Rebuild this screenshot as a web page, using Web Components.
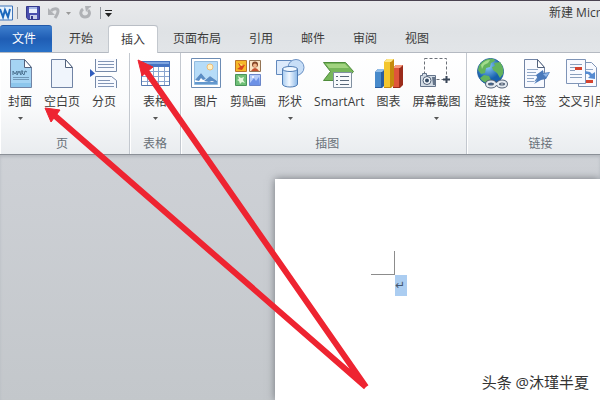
<!DOCTYPE html>
<html lang="zh-CN">
<head>
<meta charset="utf-8">
<title>新建</title>
<style>
    body {
        margin: 0;
        overflow: hidden;
        font: 12px/16px "Open Sans", "Noto Sans CJK SC", sans-serif;
        color: #3b3b3b;
    }
</style>
</head>
<body>
<word-window></word-window>
<script>
const page = (x, y, w, h, fill) => `
    <path d="M${x} ${y}h${w - 7}l7 8v${h - 8}h-${w}z" fill="${fill}" stroke="#7184a5"/>
    <path d="M${x + w - 7} ${y}v8h7z" fill="#fff" stroke="#52627d"/>`;

const icons = {
    cover: page(6.5, 1.5, 21, 28, '#a5d4f3') + `
        <path d="M9 17v-4l2 3 2-3v4l2-4 2 4v-4h2l-1 2 2 2 1-4 2 1" fill="none" stroke="#4b718f"/>
        <path d="M9 19.5h16M9 21.5h16" stroke="#7198b8"/>
        <path d="M7 25h20v4H7z" fill="#8cc6ec"/>`,
    blank: page(5.5, 1.5, 21, 28, '#f0f5fc'),
    split: `
        <path d="M7.500 1v12.500h21V1M7.500 30V18.500h16l5 4V30" fill="#f8faff" stroke="#7589a9"/>
        <path d="M10 3.500h16M10 6.500h16M10 9.500h16M10 22.500h12M10 25.500h16M10 28.500h16" stroke="#8295b5"/>
        <path d="M2 11l5 4.500L2 19z" fill="#315dbd"/>`,
    table: `
        <path d="M2.500 3.500h28v24h-28z" fill="#fff" stroke="#5578b0"/>
        <path d="M2 3h29v6H2z" fill="#4674c2"/><path d="M3 4h27v2H3z" fill="#7fa5df"/>
        <path d="M3 13.500h27M3 18.500h27M3 23.500h27M8.500 9v18M14.500 9v18M19.500 9v18M25.500 9v18" stroke="#8aa5cf"/>`,
    picture: `
        <path d="M1.500.5h29v29h-29z" fill="#fff" stroke="#6c8cb4"/>
        <path d="M4.500 3.500h23v23h-23z" fill="#b6dcf8" stroke="#93bce0"/>
        <circle cx="20" cy="9" r="3" fill="#fff2c5" stroke="#f0bd77"/>
        <path d="M5 22l6-7 5 6 4-3 7 5v3H5z" fill="#fff"/>
        <path d="M5 22l6-7 5 6-3 1-2-2-2 3zM14 23l6-5 7 5v2l-5-2-3 1z" fill="#5a8dc5"/>
        <path d="M5 24h22v2H5z" fill="#6398ce"/>`,
    clipart: `
        <path d="M3.500 2.500h11v11h-11z" fill="#f6b928" stroke="#ba742c"/>
        <path d="M6 5l7 2-3 5-5-1 3-2z" fill="#d9471d"/><path d="M7 5l5 2-3 1z" fill="#ffe95c"/>
        <path d="M17.500 2.500h11v11h-11z" fill="#fae5c5" stroke="#947454"/>
        <circle cx="23" cy="6.500" r="3" fill="#844526"/><circle cx="23" cy="7.500" r="2" fill="#f0b487"/><path d="M19 13q4-6 8 0z" fill="#c65130"/>
        <path d="M3.500 16.500h11v11h-11z" fill="#6fbf77" stroke="#499459"/>
        <path d="M6 18l3 2 3-1-1 3 2 3-3-1-2 2-1-3-2-1 2-1z" fill="#e8f9df"/>
        <path d="M17.500 16.500h11v11h-11z" fill="#b6cdfa" stroke="#6b86c9"/>
        <path d="M18 25l4-5 2 3 3-4 1 8H18z" fill="#6c91e6"/><circle cx="21" cy="19" r="1" fill="#fff"/>`,
    shapes: `
        <path d="M2.500 2.500h15v14h-15z" fill="#dceafb" stroke="#6289bd"/>
        <circle cx="22" cy="9.500" r="8" fill="#c7def7" stroke="#6b91c3"/>
        <path d="M8.500 11v15c0 4 15 4 15 0V11z" fill="url(#cyl)" stroke="#507db5"/>
        <ellipse cx="16" cy="11" rx="7.500" ry="2.500" fill="#f1f8ff" stroke="#507db5"/>
        <defs><linearGradient id="cyl"><stop stop-color="#a6cbf0"/><stop offset=".45" stop-color="#f2f8ff"/><stop offset="1" stop-color="#8bb8e8"/></linearGradient></defs>`,
    smartart: `
        <path d="M.5 4.500h22l8 9-8 9H.5l7-9z" fill="#76b65a" stroke="#4f8c3b"/>
        <path d="M3 6h19l4 4H6z" fill="#a1d37f"/>
        <path d="M10.500 14.500h18v15h-18z" fill="#f8fafc" stroke="#8090a1"/>
        <path d="M13 18.500h2M17 18.500h9M13 22.500h2M17 22.500h9M13 26.500h2M17 26.500h9" stroke="#586879"/>`,
    chart: `
        <path d="M3 14l3-3h7v16l-3 3H3z" fill="#285ca0"/><path d="M3 14h6v15H3z" fill="#478acb"/><path d="M3 14l3-3h7l-3 3z" fill="#91bee9"/>
        <path d="M21 10l3-3h7v20l-3 3h-7z" fill="#9b2c1b"/><path d="M21 10h6v19h-6z" fill="#df553b"/><path d="M21 10l3-3h7l-3 3z" fill="#f79c80"/>
        <path d="M12 4l3-3h7v26l-3 3h-7z" fill="#c58b0d"/><path d="M12 4h6v25h-6z" fill="#f3c62e"/><path d="M12 4l3-3h7l-3 3z" fill="#ffe784"/>`,
    capture: `
        <path d="M4.500.5h22v21h-22z" fill="#fff" stroke="#6c7178" stroke-dasharray="3 2"/>
        <path d="M26.500 18v7M23 21.500h7" stroke="#394658" stroke-width="2"/>
        <path d="M.5 17.500h2v-2h4v2h9v11H.5z" fill="#d3dce5" stroke="#64748a"/>
        <circle cx="7" cy="22.500" r="4" fill="#f8fbff" stroke="#4f6076"/><circle cx="7" cy="22.500" r="2" fill="#334a63"/>
        <path d="M12 19h3v8h-2z" fill="#65758a"/>`,
    link: `
        <circle cx="14.500" cy="13.500" r="13" fill="url(#sea)" stroke="#2864a1"/>
        <path d="M3 8C6 2 12 0 18 1l1 2-4 2-1 4-4 1-1 5-4 1-3-4zM18 5l6-1c3 4 4 8 3 12l-3 4-3-5-4-3-1-3 3-1zM8 17l5 1 2 4-2 4C8 24 6 23 4 20z" fill="#63b35c"/>
        <path d="M5 7q4-5 9-5l-2 3-4 2-2 4z" fill="#a3dc8d"/>
        <g fill="none" stroke="#526176" stroke-width="4"><ellipse cx="15" cy="26" rx="4" ry="2.500"/><ellipse cx="26" cy="26" rx="4" ry="2.500"/><path d="M18 27l5-2"/></g>
        <g fill="none" stroke="#e5ebf1" stroke-width="2"><ellipse cx="15" cy="26" rx="4" ry="2.500"/><ellipse cx="26" cy="26" rx="4" ry="2.500"/><path d="M18 27l5-2"/></g>
        <defs><radialGradient id="sea" cx=".4" cy=".3"><stop stop-color="#8dcdf5"/><stop offset="1" stop-color="#1760ae"/></radialGradient></defs>`,
    bookmark: page(6.5, 1.5, 20, 28, '#f8faff') + `
        <path d="M9 11.500h11M9 14.500h9M9 17.500h12M9 20.500h7M9 23.500h7" stroke="#91a7c6"/>
        <path d="M16 24l4-6 6-5-2 7z" fill="#6287b9"/>
        <path d="M18 17l7-5v3l7-1-4 7-5 1-7 4 4-5z" fill="#4b7abb"/><path d="M25 16l6-1-3 4z" fill="#90b6e6"/>`,
    crossref: `
        <path d="M12.500 4.500h13l5 5v19h-18z" fill="#f8faff" stroke="#7e94b7"/>
        <path d="M15 23.500h3M15 11.500h12M15 14.500h6" stroke="#91a7c6"/><path d="M20 22h7v3h-7z" fill="#d5432e"/>
        <path d="M.5 1.500h19v24H.5z" fill="#f8faff" stroke="#7e94b7"/>
        <path d="M4 6.500h12M4 9.500h5M4 12.500h5M4 16.500h12M4 19.500h12" stroke="#8a9fbd"/>
        <path d="M9 9h7v3H9z" fill="#d5432e"/><path d="M19 13l5 1 2 2 3-2v7l-7-1 2-2-2-2h-3z" fill="#568bd1"/>`
};

class RibbonButton extends HTMLElement {
    connectedCallback() {
        this.attachShadow({ mode: 'open' });
        this.shadowRoot.innerHTML = `
            <style>
                :host { display: block; flex: none; }
                button {
                    display: flex;
                    flex-direction: column;
                    align-items: center;
                    padding: 0;
                    border: 0;
                    background: none;
                    font: inherit;
                    color: inherit;
                    white-space: nowrap;
                }
                .icon { width: 32px; height: 32px; margin-bottom: 4px; }
                .label { padding: 0 6px; }
                .caret { margin-top: 7px; }
            </style>
            <button type="button">
                <svg class="icon" viewBox="0 0 32 32" aria-hidden="true">${icons[this.getAttribute('icon')]}</svg>
                <span class="label"><slot></slot></span>
                ${this.hasAttribute('menu') ? '<svg class="caret" width="5" height="3"><path d="M0 0h5L2.500 3z" fill="#555"/></svg>' : ''}
            </button>
        `;
    }
}

class RibbonGroup extends HTMLElement {
    connectedCallback() {
        this.attachShadow({ mode: 'open' });
        this.shadowRoot.innerHTML = `
            <style>
                :host {
                    display: flex;
                    flex: none;
                    flex-direction: column;
                    justify-content: space-between;
                    box-sizing: border-box;
                    padding: 5px 7px 2px;
                    border-right: 1px solid #c3c8cf;
                    box-shadow: inset 1px 0 #fff;
                }
                .items { display: flex; }
                .name { text-align: center; color: #697078; }
            </style>
            <div class="items"><slot></slot></div>
            <div class="name">${this.getAttribute('name')}</div>
        `;
    }
}

class RibbonTab extends HTMLElement {
    connectedCallback() {
        this.attachShadow({ mode: 'open' });
        this.shadowRoot.innerHTML = `
            <style>
                :host { display: flex; flex: none; }
                button {
                    padding: 0 12px;
                    border: 1px solid transparent;
                    border-width: 1px 0 0;
                    border-radius: 3px 3px 0 0;
                    background: none;
                    font: inherit;
                    color: inherit;
                }
                :host([file]) button {
                    padding-right: 16px;
                    border-color: #2259a8;
                    background: linear-gradient(#3e7fce, #1f5db4 50%, #2a72c8);
                    color: #fff;
                }
                :host([active]) button {
                    margin-bottom: -1px;
                    border-color: #b9bec5;
                    background: #fff;
                    box-shadow: -1px 0 #c3c8ce, 1px 0 #c3c8ce;
                }
            </style>
            <button type="button" role="tab" aria-selected="${this.hasAttribute('active')}"><slot></slot></button>
        `;
    }
}

class QuickAccess extends HTMLElement {
    connectedCallback() {
        this.attachShadow({ mode: 'open' });
        this.shadowRoot.innerHTML = `
            <style>
                :host { display: flex; flex: none; align-items: center; }
                button { display: flex; padding: 0; border: 0; background: none; }
                i { width: 1px; height: 12px; background: #92979e; }
                .word { margin-right: 4px; }
                .save { margin: 0 8px; }
                .undo { margin-right: 6px; }
                .redo { margin: 0 8px; }
                .more { margin-left: 4px; }
            </style>
            <svg class="word" width="13" height="16">
                <path d="M-2 1h14.500v14H-2z" fill="#e9f3fd" stroke="#3f75ba"/>
                <path d="M0 4l3 8 2-7 3 7 2-8" fill="none" stroke="#1d69bd" stroke-width="2"/>
            </svg>
            <i></i>
            <button class="save" type="button" aria-label="保存">
                <svg width="14" height="14"><path d="M.5.5h13v13H2l-1.500-2z" fill="#4a4fae" stroke="#34398d"/><path d="M3 1h8v6H3z" fill="#eaf0fc"/><path d="M3 1h8v2H3z" fill="#a7b8e7"/><path d="M4 9h7v4H4z" fill="#c8cde9"/><path d="M5 10h2v3H5z" fill="#34398d"/></svg>
            </button>
            <button class="undo" type="button" aria-label="撤消">
                <svg width="12" height="14"><path d="M3 5c2-3 7-3 7 0 0 2-1 4-3 7" fill="none" stroke="#b0b2b6" stroke-width="3"/><path d="M0 2v7h7z" fill="#b0b2b6"/></svg>
            </button>
            <svg width="5" height="3"><path d="M0 0h5L2.500 3z" fill="#999"/></svg>
            <button class="redo" type="button" aria-label="重复">
                <svg width="13" height="14"><path d="M4 3C0 6 2 11 6 11s6-4 3-7" fill="none" stroke="#b0b2b6" stroke-width="3"/><path d="M6 0h6v1l-2 1-3 4z" fill="#b0b2b6"/></svg>
            </button>
            <i></i>
            <button class="more" type="button" aria-label="自定义快速访问工具栏">
                <svg width="7" height="7"><path d="M0 0h7v1H0zM0 3h7L3.500 7z" fill="#222"/></svg>
            </button>
        `;
    }
}

class DocumentArea extends HTMLElement {
    connectedCallback() {
        this.attachShadow({ mode: 'open' });
        this.shadowRoot.innerHTML = `
            <style>
                :host {
                    display: flex;
                    flex: 1;
                    padding: 24px 0 0 275px;
                    background: linear-gradient(#ced1d6, #c3c7cb);
                    box-shadow: inset 0 2px 3px #b6bac0;
                }
                .sheet {
                    flex: 1;
                    box-sizing: border-box;
                    padding: 72px 0 0 96px;
                    background: #fff;
                    box-shadow: 0 0 8px #72767c;
                }
                .corner {
                    width: 23px;
                    height: 23px;
                    border: solid #8c8c8c;
                    border-width: 0 1px 1px 0;
                }
                .mark {
                    display: block;
                    width: 12px;
                    margin-left: 24px;
                    background: #abcdf1;
                    font: 12px/21px "DejaVu Sans", sans-serif;
                    color: #44566e;
                    text-align: left;
                }
            </style>
            <div class="sheet">
                <div class="corner"></div>
                <span class="mark">↵</span>
            </div>
        `;
    }
}

// red arrows and the signature drawn over the window
class NoteLayer extends HTMLElement {
    connectedCallback() {
        this.attachShadow({ mode: 'open' });
        this.shadowRoot.innerHTML = `
            <style>
                :host { position: absolute; inset: 0; pointer-events: none; overflow: hidden; }
                svg { position: absolute; top: 0; left: 0; }
                .sign {
                    position: absolute;
                    right: 11px;
                    bottom: 8px;
                    font-size: 15px;
                    line-height: 20px;
                    color: #333;
                }
            </style>
            <svg width="600" height="400" fill="#ee2431">
                <path d="M146 71L366 387M54 115L366 387" stroke="#ee2431" stroke-width="6"/>
                <path d="M138 60l15 7-11 9zM45 108l15 2-9 12z" stroke="#ee2431" stroke-linejoin="round"/>
            </svg>
            <span class="sign">头条 @沐瑾半夏</span>
        `;
    }
}

class WordWindow extends HTMLElement {
    connectedCallback() {
        this.attachShadow({ mode: 'open' });
        this.shadowRoot.innerHTML = `
            <style>
                :host {
                    position: relative;
                    display: flex;
                    flex-direction: column;
                    height: 100vh;
                    overflow: hidden;
                }
                .top {
                    border-top: 1px solid #4a4250;
                    border-bottom: 1px solid #b4b9c1;
                    background: linear-gradient(#e9eaec, #dfe2e5 60%, #e2e5e8);
                }
                .title { display: flex; justify-content: space-between; align-items: center; height: 24px; }
                .title span { width: 51px; overflow: hidden; white-space: nowrap; }
                .tabs { display: flex; gap: 4px; height: 27px; }
                .tabs [file] { margin-right: 1px; }
                .ribbon {
                    display: flex;
                    height: 101px;
                    overflow: hidden;
                    border-bottom: 1px solid #8b9097;
                    background: linear-gradient(#fff, #fafbfc 50%, #e9ecef);
                }
                .first { padding-left: 2px; }
                .flush { padding-right: 0; }
                .last { padding-left: 1px; }
            </style>
            <div class="top">
                <div class="title">
                    <quick-access></quick-access>
                    <span>新建 Micro</span>
                </div>
                <div class="tabs" role="tablist">
                    <ribbon-tab file>文件</ribbon-tab>
                    <ribbon-tab>开始</ribbon-tab>
                    <ribbon-tab active>插入</ribbon-tab>
                    <ribbon-tab>页面布局</ribbon-tab>
                    <ribbon-tab>引用</ribbon-tab>
                    <ribbon-tab>邮件</ribbon-tab>
                    <ribbon-tab>审阅</ribbon-tab>
                    <ribbon-tab>视图</ribbon-tab>
                </div>
            </div>
            <div class="ribbon">
                <ribbon-group class="first" name="页">
                    <ribbon-button icon="cover" menu>封面</ribbon-button>
                    <ribbon-button icon="blank">空白页</ribbon-button>
                    <ribbon-button icon="split">分页</ribbon-button>
                </ribbon-group>
                <ribbon-group name="表格">
                    <ribbon-button icon="table" menu>表格</ribbon-button>
                </ribbon-group>
                <ribbon-group class="flush" name="插图">
                    <ribbon-button icon="picture">图片</ribbon-button>
                    <ribbon-button icon="clipart">剪贴画</ribbon-button>
                    <ribbon-button icon="shapes" menu>形状</ribbon-button>
                    <ribbon-button icon="smartart">SmartArt</ribbon-button>
                    <ribbon-button icon="chart">图表</ribbon-button>
                    <ribbon-button icon="capture" menu>屏幕截图</ribbon-button>
                </ribbon-group>
                <ribbon-group class="last" name="链接">
                    <ribbon-button icon="link">超链接</ribbon-button>
                    <ribbon-button icon="bookmark">书签</ribbon-button>
                    <ribbon-button icon="crossref">交叉引用</ribbon-button>
                </ribbon-group>
            </div>
            <document-area></document-area>
            <note-layer></note-layer>
        `;
    }
}

customElements.define('ribbon-button', RibbonButton);
customElements.define('ribbon-group', RibbonGroup);
customElements.define('ribbon-tab', RibbonTab);
customElements.define('quick-access', QuickAccess);
customElements.define('document-area', DocumentArea);
customElements.define('note-layer', NoteLayer);
customElements.define('word-window', WordWindow);
</script>
</body>
</html>
